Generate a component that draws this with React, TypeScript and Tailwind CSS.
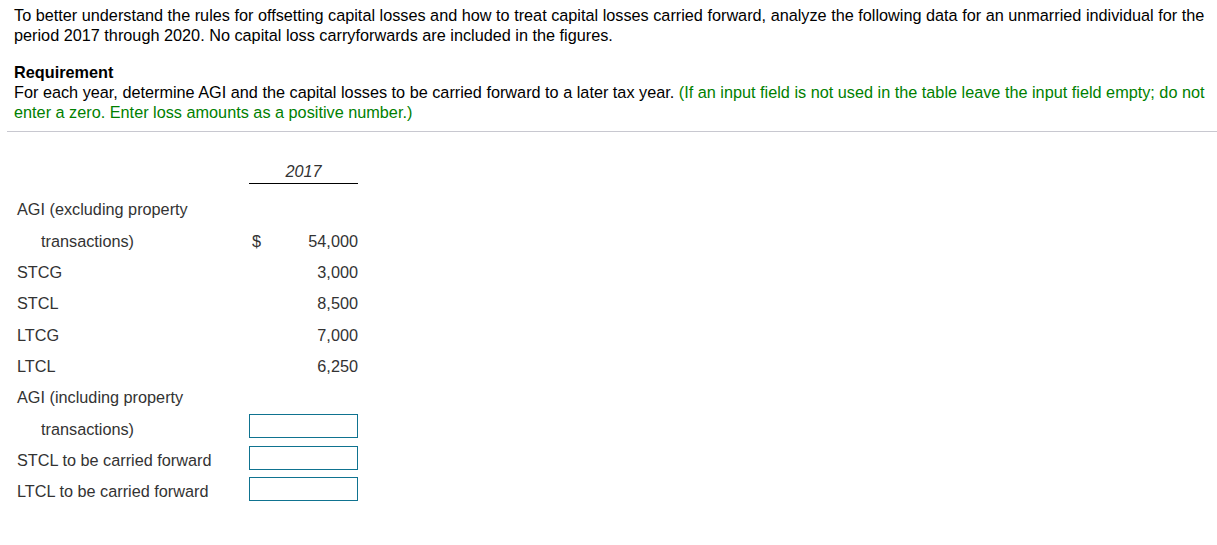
import React from "react";

const rows: { label: string; indent?: boolean; dollar?: boolean; value?: string; input?: boolean }[] = [
  { label: "AGI (excluding property" },
  { label: "transactions)", indent: true, dollar: true, value: "54,000" },
  { label: "STCG", value: "3,000" },
  { label: "STCL", value: "8,500" },
  { label: "LTCG", value: "7,000" },
  { label: "LTCL", value: "6,250" },
  { label: "AGI (including property" },
  { label: "transactions)", indent: true, input: true },
  { label: "STCL to be carried forward", input: true },
  { label: "LTCL to be carried forward", input: true },
];

export default function App() {
  return (
    <div className="w-[1217px] h-[545px] bg-white" style={{ fontFamily: '"Liberation Sans", Arial, sans-serif' }}>
      <div className="pl-[14px] pr-[6px] pt-[5px] text-[16.25px] leading-[20px] text-black">
        <p>
          To better understand the rules for offsetting capital losses and how to treat capital losses carried forward, analyze the following data for an unmarried individual for the period 2017 through 2020. No capital loss carryforwards are included in the figures.
        </p>
        <p className="mt-[17px] font-bold">Requirement</p>
        <p>
          For each year, determine AGI and the capital losses to be carried forward to a later tax year.{" "}
          <span className="text-[#008000]">
            (If an input field is not used in the table leave the input field empty; do not enter a zero. Enter loss amounts as a positive number.)
          </span>
        </p>
      </div>
      <div className="ml-[7px] mt-[9px] h-px bg-[#c8c8d0]" />
      <div className="ml-[17px] mt-[28px] text-[16.25px] text-[#333]">
        <div className="grid grid-cols-[232px_109px]">
          <div />
          <div className="h-[24px] flex items-end justify-center italic border-b border-black pb-[3px] leading-[18px]">2017</div>
        </div>
        <div className="mt-[10px]">
          {rows.map((r, i) => (
            <div key={i} className="grid grid-cols-[232px_109px] h-[31.3px] items-center">
              <div className={r.indent ? "pl-[24px]" : ""}>{r.label}</div>
              <div className="flex items-center justify-between">
                {r.input ? (
                  <div className="w-[109px] h-[24px] mb-[5px] border border-[#0f7390]" />
                ) : (
                  <>
                    <span className="pl-[3px]">{r.dollar ? "$" : ""}</span>
                    <span>{r.value ?? ""}</span>
                  </>
                )}
              </div>
            </div>
          ))}
        </div>
      </div>
    </div>
  );
}
